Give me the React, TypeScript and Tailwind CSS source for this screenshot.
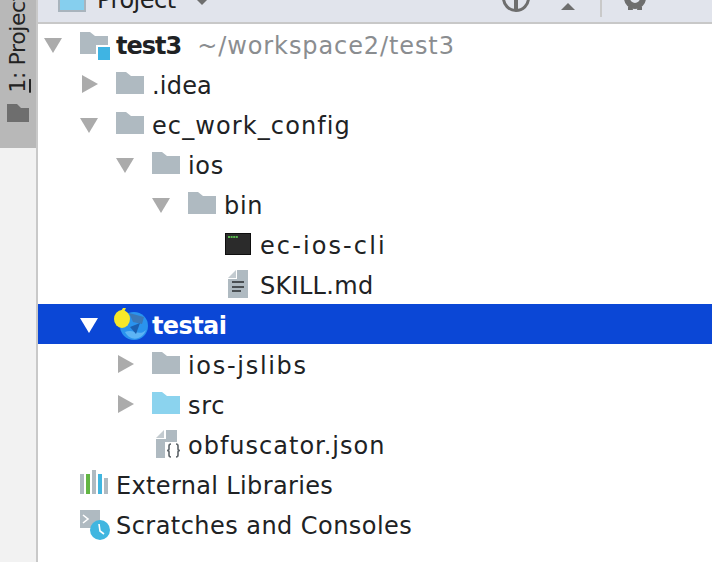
import React from "react";

const font = { fontFamily: '"DejaVu Sans", sans-serif' };

const Arrow = ({ open, color = "#ababab" }: { open?: boolean; color?: string }) => (
  <svg width="18" height="20" viewBox="0 0 18 20" className="block">
    {open ? <polygon points="0,4 18,4 9,19" fill={color} /> : <polygon points="2,1 18,10 2,19" fill={color} />}
  </svg>
);

const Folder = ({ color = "#afbac1" }: { color?: string }) => (
  <svg width="28" height="22" viewBox="0 0 28 22" className="mb-[2px] block">
    <path d="M0 0H10L15 4H28V22H0Z" fill={color} />
  </svg>
);

const ProjectFolder = () => (
  <svg width="32" height="32" viewBox="0 0 32 32" className="block">
    <path d="M0 4H10L15 8H28V26H0Z" fill="#afbac1" />
    <rect x="16" y="17" width="16" height="15" fill="#fff" />
    <rect x="18" y="19" width="12" height="13" fill="#3fb4e3" />
  </svg>
);

const Terminal = () => (
  <svg width="26" height="22" viewBox="0 0 26 22" className="ml-px block">
    <rect x="0.5" y="0.5" width="25" height="21" fill="#2b2b2b" stroke="#0e0e0e" />
    <path d="M3 4H13" stroke="#59b84f" strokeWidth="2" strokeDasharray="2 0.6" />
  </svg>
);

const TextFile = () => (
  <svg width="20" height="28" viewBox="0 0 20 28" className="ml-1 block">
    <path d="M0 8L8 0V8Z" fill="#c3cbd0" />
    <path d="M9 0H20V28H0V9H9Z" fill="#afbac1" />
    <rect x="4" y="11" width="12" height="2" fill="#4a4f53" />
    <rect x="4" y="16" width="12" height="2" fill="#4a4f53" />
    <rect x="4" y="20" width="9" height="2" fill="#4a4f53" />
  </svg>
);

const JsonFile = () => (
  <svg width="26" height="30" viewBox="0 0 26 30" className="ml-1 block">
    <path d="M0 9L8 1V9Z" fill="#c3cbd0" />
    <path d="M10 1H21V13H10V29H0V10H10Z" fill="#afbac1" />
    <rect x="9" y="13" width="17" height="17" fill="#fff" />
    <path
      d="M15 15Q13 15 13 17V20Q13 21.5 11 21.5Q13 21.5 13 23V26Q13 28 15 28M20 15Q22 15 22 17V20Q22 21.5 24 21.5Q22 21.5 22 23V26Q22 28 20 28"
      fill="none"
      stroke="#5d6469"
      strokeWidth="1.6"
    />
  </svg>
);

const AppIcon = () => (
  <svg width="36" height="32" viewBox="0 0 36 32" className="-ml-[3px] block">
    <circle cx="21" cy="18" r="14" fill="#2a93ee" />
    <path d="M12 24C20 20 26 29 33 22C30 31 18 35 12 24Z" fill="#5db4f5" />
    <path d="M16 5L31 9L29 16L20 14Z" fill="#3b78b8" />
    <path d="M17 19L27 15L23 26Z" fill="#1b5fb0" />
    <ellipse cx="9" cy="11" rx="8" ry="9" fill="#f7e82a" />
    <path d="M8 3L10 0H13L11 4Z" fill="#f7e82a" />
  </svg>
);

const Libraries = () => (
  <svg width="28" height="24" viewBox="0 0 28 24" className="mb-1 block">
    <rect x="0" y="4" width="4" height="20" fill="#afbac1" />
    <rect x="6" y="4" width="4" height="20" fill="#62b543" />
    <rect x="12" y="0" width="4" height="24" fill="#afbac1" />
    <rect x="18" y="4" width="4" height="20" fill="#40b6e0" />
    <rect x="24" y="8" width="4" height="16" fill="#afbac1" />
  </svg>
);

const Scratches = () => (
  <svg width="30" height="30" viewBox="0 0 30 30" className="mt-[2px] block">
    <rect x="0" y="0" width="20" height="18" fill="#afbac1" />
    <path d="M3 5L8 9L3 13" fill="none" stroke="#fff" strokeWidth="1.6" />
    <circle cx="20" cy="20" r="10" fill="#40b6e0" />
    <path d="M19 14L20 21L24 24" fill="none" stroke="#fff" strokeWidth="1.6" />
  </svg>
);

type RowProps = {
  depth: number;
  arrow?: "open" | "closed";
  icon: React.ReactNode;
  label: string;
  tracking: string;
  hint?: string;
  bold?: boolean;
  selected?: boolean;
};

const Row = ({ depth, arrow, icon, label, tracking, hint, bold, selected }: RowProps) => (
  <div className={`flex h-10 items-center ${selected ? "bg-[#0b47d6] text-white" : "text-[#202224]"}`}>
    <div className="w-9 shrink-0" style={{ marginLeft: depth * 36 + 6 }}>
      {arrow && <Arrow open={arrow === "open"} color={selected ? "#ffffff" : "#ababab"} />}
    </div>
    <div className="flex w-[36px] shrink-0 items-center">{icon}</div>
    <span className={`mt-1 whitespace-nowrap text-[24px] ${tracking} ${bold ? "font-bold" : ""}`}>{label}</span>
    {hint && <span className="ml-4 mt-1 whitespace-nowrap text-[24px] tracking-[0.9px] text-[#8a8d90]">{hint}</span>}
  </div>
);

export default function App() {
  return (
    <div className="flex h-[562px] w-[712px] overflow-hidden bg-white" style={font}>
      <div className="flex w-[38px] shrink-0 flex-col border-r-2 border-[#c9c9c9] bg-[#f2f2f2]">
        <div className="flex h-[148px] flex-col items-center justify-end overflow-hidden bg-[#b8b8b8] pb-[26px]">
          <span className="rotate-180 whitespace-nowrap text-[22px] leading-none tracking-[-0.4px] text-[#222] [writing-mode:vertical-rl]">
            <span className="underline">1</span>: Project
          </span>
          <svg width="22" height="18" viewBox="0 0 22 18" className="mt-[11px] block shrink-0">
            <path d="M0 0H10L14 4H22V18H0Z" fill="#6e6e6e" />
          </svg>
        </div>
      </div>
      <div className="min-w-0 flex-1">
        <div className="flex h-6 items-end overflow-hidden border-b-2 border-[#c8c8c8] bg-[#e1e4ec]">
          <div className="mb-[10px] ml-5 h-[28px] w-[28px] shrink-0 border-2 border-[#a9b4bd] bg-[#86cfee]" />
          <span className="mb-[8px] ml-[11px] text-[24px] leading-[28px] tracking-[-0.5px] text-[#222]">Project</span>
          <svg width="12" height="6" viewBox="0 0 12 6" className="mb-[17px] ml-[20px] block shrink-0">
            <polygon points="0,0 12,0 6,6" fill="#6e6e6e" />
          </svg>
          <svg width="30" height="30" viewBox="0 0 30 30" className="mb-[9px] ml-[293px] block shrink-0">
            <circle cx="15" cy="15" r="12.5" fill="none" stroke="#6e6e6e" strokeWidth="3" />
            <rect x="13" y="14" width="4" height="12" fill="#6e6e6e" />
          </svg>
          <svg width="14" height="7" viewBox="0 0 14 7" className="mb-[12px] ml-[30px] block shrink-0">
            <polygon points="7,0 14,7 0,7" fill="#6e6e6e" />
          </svg>
          <div className="mb-[5px] ml-[25px] h-[24px] w-[2px] shrink-0 bg-[#c9c9c9]" />
          <svg width="26" height="26" viewBox="0 0 26 26" className="mb-[11px] ml-[20px] block shrink-0">
            <circle cx="13" cy="13" r="8" fill="none" stroke="#6e6e6e" strokeWidth="6" />
            <path d="M1 11H25V15H1ZM6 22L10 20L11 25H6ZM20 22L16 20L15 25H20Z" fill="#6e6e6e" />
          </svg>
        </div>
        <div>
          <Row depth={0} arrow="open" icon={<ProjectFolder />} label="test3" tracking="tracking-[-1px]" hint="~/workspace2/test3" bold />
          <Row depth={1} arrow="closed" icon={<Folder />} label=".idea" tracking="tracking-[0.2px]" />
          <Row depth={1} arrow="open" icon={<Folder />} label="ec_work_config" tracking="tracking-[1.1px]" />
          <Row depth={2} arrow="open" icon={<Folder />} label="ios" tracking="tracking-[0.7px]" />
          <Row depth={3} arrow="open" icon={<Folder />} label="bin" tracking="tracking-[0.7px]" />
          <Row depth={4} icon={<Terminal />} label="ec-ios-cli" tracking="tracking-[2.1px]" />
          <Row depth={4} icon={<TextFile />} label="SKILL.md" tracking="tracking-[0.3px]" />
          <Row depth={1} arrow="open" icon={<AppIcon />} label="testai" tracking="tracking-[-0.6px]" bold selected />
          <Row depth={2} arrow="closed" icon={<Folder />} label="ios-jslibs" tracking="tracking-[1.7px]" />
          <Row depth={2} arrow="closed" icon={<Folder color="#8bd3ee" />} label="src" tracking="tracking-[0.7px]" />
          <Row depth={2} icon={<JsonFile />} label="obfuscator.json" tracking="tracking-[1px]" />
          <Row depth={0} icon={<Libraries />} label="External Libraries" tracking="tracking-[0.35px]" />
          <Row depth={0} icon={<Scratches />} label="Scratches and Consoles" tracking="tracking-[0.45px]" />
        </div>
      </div>
    </div>
  );
}
